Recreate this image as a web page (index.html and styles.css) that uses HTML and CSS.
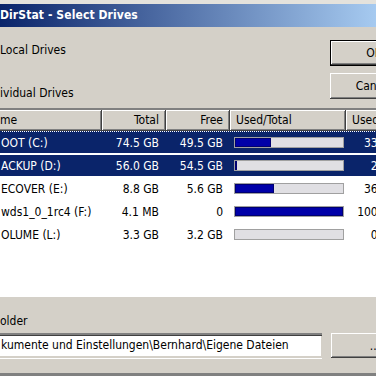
FILE: index.html
```html
<!DOCTYPE html>
<html lang="de">
  <head>
    <meta charset="UTF-8" />
    <title>WinDirStat - Select Drives</title>
    <link rel="stylesheet" href="styles.css">
  </head>
  <body>
    <div class="window">
      <div class="titlebar">DirStat - Select Drives</div>

      <div class="top">
        <div class="options">
          <div class="opt opt-all">Local Drives</div>
          <div class="opt opt-ind">ividual Drives</div>
        </div>
        <div class="buttons">
          <button class="btn btn-default">OK</button>
          <button class="btn">Cancel</button>
        </div>
      </div>

      <div class="list">
        <div class="row head">
          <div class="cell name">me</div>
          <div class="cell num">Total</div>
          <div class="cell num">Free</div>
          <div class="cell bar-head">Used/Total</div>
          <div class="cell used-head">Used</div>
        </div>

        <div class="row sel focus">
          <div class="cell name">OOT (C:)</div>
          <div class="cell num">74.5 GB</div>
          <div class="cell num">49.5 GB</div>
          <div class="cell"><div class="bar"><div class="fill" style="width: 33%"></div></div></div>
          <div class="cell pct">33%</div>
        </div>
        <div class="row sel">
          <div class="cell name">ACKUP (D:)</div>
          <div class="cell num">56.0 GB</div>
          <div class="cell num">54.5 GB</div>
          <div class="cell"><div class="bar"><div class="fill" style="width: 2%"></div></div></div>
          <div class="cell pct">2%</div>
        </div>
        <div class="row">
          <div class="cell name">ECOVER (E:)</div>
          <div class="cell num">8.8 GB</div>
          <div class="cell num">5.6 GB</div>
          <div class="cell"><div class="bar"><div class="fill" style="width: 36%"></div></div></div>
          <div class="cell pct">36%</div>
        </div>
        <div class="row">
          <div class="cell name">wds1_0_1rc4 (F:)</div>
          <div class="cell num">4.1 MB</div>
          <div class="cell num">0</div>
          <div class="cell"><div class="bar"><div class="fill" style="width: 100%"></div></div></div>
          <div class="cell pct">100%</div>
        </div>
        <div class="row">
          <div class="cell name">OLUME (L:)</div>
          <div class="cell num">3.3 GB</div>
          <div class="cell num">3.2 GB</div>
          <div class="cell"><div class="bar"><div class="fill" style="width: 0%"></div></div></div>
          <div class="cell pct">0%</div>
        </div>
      </div>

      <div class="folder-label">older</div>
      <div class="folder">
        <div class="textbox">kumente und Einstellungen\Bernhard\Eigene Dateien</div>
        <button class="btn">...</button>
      </div>
    </div>
  </body>
</html>
```

FILE: styles.css
```css
body {
  margin: 0;
  background-color: #d4d0c8;
  font-family: "DejaVu Sans Condensed", "DejaVu Sans", sans-serif;
  font-stretch: condensed;
  font-size: 12px;
  color: #000;
  overflow: hidden;
}
.window {
  width: 376px;
  height: 376px;
  overflow: hidden;
  background-color: #d4d0c8;
  border-top: 4px solid #e4e2dc;
  border-bottom: 3px solid #808080;
  box-sizing: border-box;
}
.titlebar {
  height: 23px;
  line-height: 23px;
  background: linear-gradient(to right, #0a246a, #a6caf0);
  color: #fff;
  font-weight: bold;
  font-size: 12px;
  letter-spacing: 0.1px;
  white-space: nowrap;
}
.top {
  display: flex;
  height: 73px;
}
.options {
  flex: 1;
  display: flex;
  flex-direction: column;
}
.opt {
  line-height: 14px;
  white-space: nowrap;
}
.opt-all {
  margin-top: 16px;
}
.opt-ind {
  margin-top: 29px;
}
.buttons {
  width: 88px;
  margin-right: -42px;
  padding-top: 13px;
  display: flex;
  flex-direction: column;
  gap: 7px;
}
.btn {
  font: inherit;
  height: 26px;
  width: 88px;
  padding: 0;
  background-color: #d4d0c8;
  color: #000;
  border: none;
  box-shadow: inset -1px -1px #404040, inset 1px 1px #fff, inset -2px -2px #808080;
}
.btn-default {
  border: 1px solid #000;
}
.list {
  margin-top: 8px;
  height: 189px;
  background-color: #fff;
  border-top: 2px solid #808080;
  border-bottom: 2px solid #fff;
  box-shadow: inset 0 1px #404040;
  box-sizing: border-box;
}
.row {
  display: grid;
  grid-template-columns: 102px 64px 64px 116px 44px;
  height: 23px;
  align-items: center;
  border-top: 1px solid #fff;
  border-bottom: 1px solid #fff;
  box-sizing: border-box;
  white-space: nowrap;
}
.row.head {
  height: 21px;
  border: none;
  background-color: #d4d0c8;
}
.head .cell {
  height: 21px;
  line-height: 20px;
  box-sizing: border-box;
  box-shadow: inset -1px -1px #404040, inset 1px 1px #fff, inset -2px -2px #808080;
}
.head .name {
  padding-left: 0;
  box-shadow: inset -1px -1px #404040, inset 0 1px #fff, inset -2px -2px #808080;
}
.cell {
  overflow: hidden;
}
.name {
  padding-left: 1px;
}
.num {
  text-align: right;
  padding-right: 7px;
}
.bar-head,
.used-head {
  padding-left: 6px;
}
.pct {
  text-align: right;
  padding-right: 2px;
}
.sel {
  background-color: #0a246a;
  background-clip: padding-box;
  color: #fff;
}
.focus {
  border-top: 1px dotted #0a246a;
}
.bar {
  margin-left: 4px;
  width: 110px;
  height: 11px;
  background-color: #e0dfe3;
  border: 1px solid #a0a0a0;
  box-sizing: border-box;
}
.fill {
  height: 100%;
  background-color: #0000a8;
  box-shadow: inset 0 0 0 1px #000070;
}
.folder-label {
  margin-top: 17px;
  line-height: 14px;
}
.folder {
  margin-top: 5px;
  display: flex;
  gap: 9px;
  height: 25px;
}
.textbox {
  width: 322px;
  flex: none;
  background-color: #fff;
  box-sizing: border-box;
  line-height: 21px;
  padding-left: 1px;
  white-space: nowrap;
  border-top: 2px solid #808080;
  border-bottom: 2px solid #d4d0c8;
  box-shadow: inset 0 1px #404040, inset -1px 0 #d4d0c8, 0 1px #fff;
}
.folder .btn {
  height: 25px;
  flex: none;
}
```
